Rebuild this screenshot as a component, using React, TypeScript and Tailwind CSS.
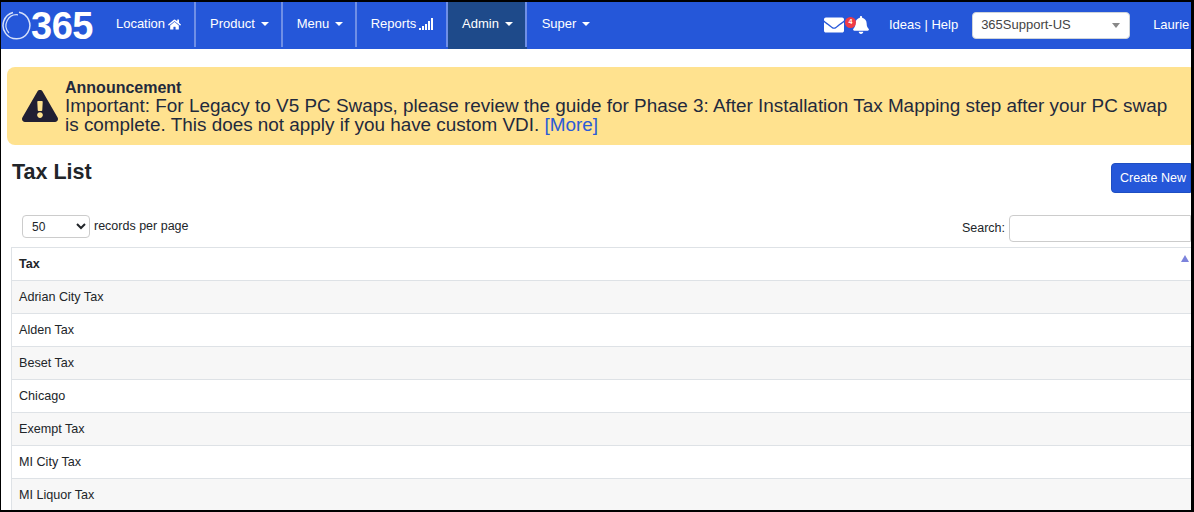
import { FaBell, FaEnvelope, FaExclamationTriangle, FaHome } from "react-icons/fa";

const rows = ["Adrian City Tax", "Alden Tax", "Beset Tax", "Chicago", "Exempt Tax", "MI City Tax", "MI Liquor Tax"];

function Caret() {
  return <span className="ml-[6px] inline-block border-x-[4px] border-t-[4px] border-x-transparent border-t-white align-middle" />;
}

function NavItem({ children, active, width, divider = true }: { children: React.ReactNode; active?: boolean; width: string; divider?: boolean }) {
  return (
    <div className={`flex h-[47px] shrink-0 items-start ${width} ${active ? "bg-[#1e4a8a]" : ""}`}>
      <div className={`flex h-[45px] w-full items-center justify-center pb-[1px] ${divider ? "border-r-2 border-[#6f8fe6] pl-[2px]" : ""}`}>{children}</div>
    </div>
  );
}

function SignalIcon() {
  return (
    <svg width="15" height="12" viewBox="0 0 15 12" className="ml-[3px]" fill="white">
      <rect x="0" y="10" width="2" height="2" />
      <rect x="3" y="8" width="2" height="4" />
      <rect x="6" y="6" width="2" height="6" />
      <rect x="9" y="3" width="2" height="9" />
      <rect x="12" y="0" width="2" height="12" />
    </svg>
  );
}

export default function App() {
  return (
    <div className="h-[512px] w-[1194px] overflow-hidden border-t-2 border-b-2 border-l border-r-[3px] border-black bg-white font-['Liberation_Sans',sans-serif] text-[12.5px] text-[#212529]">
      <div className="flex h-[47px] items-center bg-[#2557d9] text-[13px] text-white">
        <div className="flex w-[100px] shrink-0 items-center pl-[1px]">
          <svg width="29" height="29" viewBox="0 0 29 29" fill="none" stroke="#d5e0fa">
            <path d="M17 1.3 A13.4 13.4 0 1 1 11 1.5" strokeWidth="1.5" />
            <path d="M7 22 A10.8 10.8 0 0 1 16 3.8" strokeWidth="1.2" />
          </svg>
          <span className="text-[38px] leading-none font-bold tracking-[-0.5px]">365</span>
        </div>
        <NavItem width="w-[95px]">
          Location <FaHome size={13} className="ml-[3px]" />
        </NavItem>
        <NavItem width="w-[87px]">
          Product <Caret />
        </NavItem>
        <NavItem width="w-[74px]">
          Menu <Caret />
        </NavItem>
        <NavItem width="w-[91px]">
          Reports <SignalIcon />
        </NavItem>
        <NavItem width="w-[79px]" active>
          Admin <Caret />
        </NavItem>
        <NavItem width="w-[78px]" divider={false}>
          Super <Caret />
        </NavItem>
        <div className="ml-[219px] flex shrink-0 items-center whitespace-nowrap pb-[1px]">
          <div className="relative flex items-center">
            <FaEnvelope size={20} />
            <span className="absolute left-[21px] top-[2px] flex h-[11px] w-[11px] items-center justify-center rounded-full bg-[#ef3b46] text-[7px] font-bold">4</span>
            <FaBell size={18} className="ml-[8px]" />
          </div>
          <span className="ml-[19px]">Ideas | Help</span>
          <div className="ml-[14px] flex h-[27px] w-[158px] items-center justify-between rounded-[4px] border border-[#ced4da] bg-white pl-[8px] pr-[9px] text-[#444]">
            365Support-US
            <span className="border-x-[4px] border-t-[5px] border-x-transparent border-t-[#888]" />
          </div>
          <span className="ml-[23px]">Laurie -</span>
        </div>
      </div>

      <div className="px-[6px] pt-[18px]">
        <div className="flex h-[78px] w-[1190px] items-center rounded-[8px] bg-[#ffe28f] pl-[15px] text-[#1f2a3d]">
          <FaExclamationTriangle size={36} color="#211f33" className="shrink-0" />
          <div className="ml-[7px] text-[18.9px] leading-[19px]">
            <div className="text-[16px] font-bold leading-[17px]">Announcement</div>
            Important: For Legacy to V5 PC Swaps, please review the guide for Phase 3: After Installation Tax Mapping step after your PC swap
            <br />
            is complete. This does not apply if you have custom VDI. <span className="text-[#2a5bd7]">[More]</span>
          </div>
        </div>
      </div>

      <div className="flex items-start justify-between pl-[11px] pt-[14px]">
        <h1 className="text-[21.5px] font-bold leading-[26px]">Tax List</h1>
        <button className="mt-[4px] h-[30px] w-[80px] rounded-l-[4px] border border-[#1e4ec2] bg-[#2557d9] pl-[8px] text-left text-white">Create New</button>
      </div>

      <div className="flex items-center justify-between pl-[21px] pt-[22px]">
        <div className="flex items-center">
          <select defaultValue="50" className="mb-[4px] h-[23px] w-[68px] rounded-[4px] border border-[#ccc] pl-[5px] text-[12px]">
            <option>50</option>
          </select>
          <span className="mb-[4px] ml-[4px]">records per page</span>
        </div>
        <div className="flex items-center">
          Search:
          <div className="ml-[4px] h-[27px] w-[182px] rounded-l-[4px] border border-[#ccc]" />
        </div>
      </div>

      <div className="ml-[10px] mt-[5px] border-t border-l border-[#dee2e6] text-[12.6px]">
        <div className="relative flex h-[33px] items-center border-b border-[#dee2e6] pl-[7px] font-bold">
          Tax
          <span className="absolute right-[2px] top-[7px] border-x-[4px] border-b-[7px] border-x-transparent border-b-[#7c83dc]" />
        </div>
        {rows.map((r, i) => (
          <div key={r} className={`flex h-[33px] items-center border-b border-[#dee2e6] pl-[7px] ${i % 2 === 0 ? "bg-[#f7f7f7]" : "bg-white"}`}>
            {r}
          </div>
        ))}
      </div>
    </div>
  );
}
